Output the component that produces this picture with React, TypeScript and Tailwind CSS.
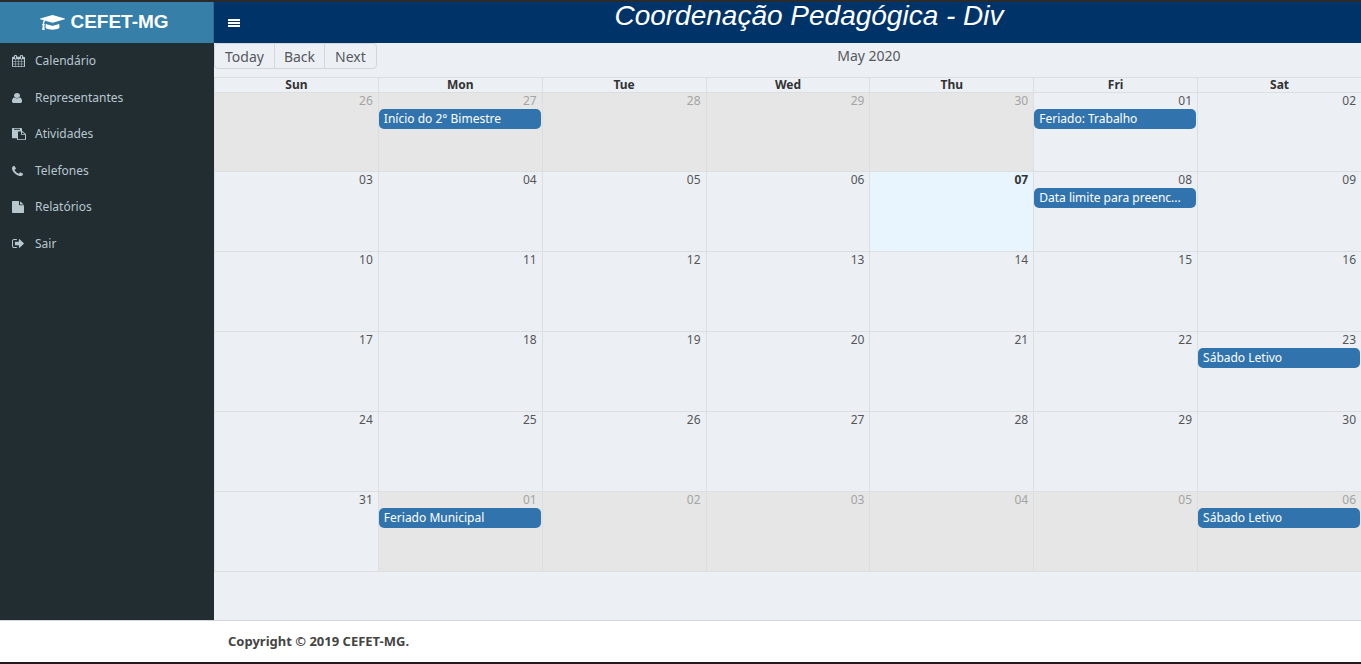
import React from 'react';

type IconProps = { path: string; viewBox?: string; className: string };

function Icon({ path, viewBox = '0 0 1792 1792', className }: IconProps) {
  return (
    <svg viewBox={viewBox} preserveAspectRatio="none" fill="currentColor" aria-hidden="true" className={className}>
      <path d={path} />
    </svg>
  );
}

const capPath =
  'M1774 1000l18 316q4 69-82 128t-235 93.5-323 34.5-323-34.5-235-93.5-82-128l18-316 574 181q22 7 48 7t48-7zm530-488q0 23-22 31l-1120 352q-4 1-10 1t-10-1l-652-206q-43 34-71 111.5t-34 178.5q63 36 63 109 0 69-58 107l58 433q2 14-8 25-9 11-24 11h-192q-15 0-24-11-10-11-8-25l58-433q-58-38-58-107 0-73 65-111 11-207 98-330l-333-104q-22-8-22-31t22-31l1120-352q4-1 10-1t10 1l1120 352q22 8 22 31z';

const menu = [
  {
    label: 'Calendário',
    viewBox: '64 0 1664 1792',
    size: 'h-3 w-[13px]',
    path: 'M192 1664h288v-288h-288v288zM544 1664h320v-288h-320v288zM192 1312h288v-320h-288v320zM544 1312h320v-320h-320v320zM192 928h288v-288h-288v288zM928 1664h320v-288h-320v288zM544 928h320v-288h-320v288zM1312 1664h288v-288h-288v288zM928 1312h320v-320h-320v320zM576 480v-288q0-13-9.5-22.5t-22.5-9.5h-64q-13 0-22.5 9.5t-9.5 22.5v288q0 13 9.5 22.5t22.5 9.5h64q13 0 22.5-9.5t9.5-22.5zM1312 1312h288v-320h-288v320zM928 928h320v-288h-320v288zM1312 928h288v-288h-288v288zM1344 480v-288q0-13-9.5-22.5t-22.5-9.5h-64q-13 0-22.5 9.5t-9.5 22.5v288q0 13 9.5 22.5t22.5 9.5h64q13 0 22.5-9.5t9.5-22.5zM1728 384v1280q0 52-38 90t-90 38h-1408q-52 0-90-38t-38-90v-1280q0-52 38-90t90-38h128v-96q0-66 47-113t113-47h64q66 0 113 47t47 113v96h384v-96q0-66 47-113t113-47h64q66 0 113 47t47 113v96h128q52 0 90 38t38 90z',
  },
  {
    label: 'Representantes',
    viewBox: '256 128 1280 1536',
    size: 'h-[10px] w-[10px]',
    path: 'M1536 1399q0 109-62.5 187t-150.5 78h-854q-88 0-150.5-78t-62.5-187q0-85 8.5-160.5t31.5-152 58.5-131 94-89 134.5-34.5q131 128 313 128t313-128q76 0 134.5 34.5t94 89 58.5 131 31.5 152 8.5 160.5zm-256-887q0 159-112.5 271.5t-271.5 112.5-271.5-112.5-112.5-271.5 112.5-271.5 271.5-112.5 271.5 112.5 112.5 271.5z',
  },
  {
    label: 'Atividades',
    viewBox: '0 0 1792 1792',
    size: 'h-3 w-[14px]',
    path: 'M768 1664h896v-640h-416q-40 0-68-28t-28-68v-416h-384v1152zm256-1440v-64q0-13-9.5-22.5t-22.5-9.5h-704q-13 0-22.5 9.5t-9.5 22.5v64q0 13 9.5 22.5t22.5 9.5h704q13 0 22.5-9.5t9.5-22.5zm256 672h299l-299-299v299zm512 128v672q0 40-28 68t-68 28h-960q-40 0-68-28t-28-68v-160h-544q-40 0-68-28t-28-68v-1344q0-40 28-68t68-28h1088q40 0 68 28t28 68v328q21 13 36 28l408 408q28 28 48 76t20 88z',
  },
  {
    label: 'Telefones',
    viewBox: '192 128 1408 1408',
    size: 'h-[10px] w-[11px]',
    path: 'M1600 1240q0 27-10 70.5t-21 68.5q-21 50-122 106-94 51-186 51-27 0-52.5-3.5t-57.5-12.5-47.5-14.5-55.5-20.5-49-18q-98-35-175-83-128-79-264.5-215.5t-215.5-264.5q-48-77-83-175-3-9-18-49t-20.5-55.5-14.5-47.5-12.5-57.5-3.5-52.5q0-92 51-186 56-101 106-122 25-11 68.5-21t70.5-10q14 0 21 3 18 6 53 76 11 19 30 54t35 63.5 31 53.5q3 4 17.5 25t21.5 35.5 7 28.5q0 20-28.5 50t-62 55-62 53-28.5 46q0 9 5 22.5t8.5 20.5 14 24 11.5 19q76 137 174 235t235 174q2 1 19 11.5t24 14 20.5 8.5 22.5 5q18 0 46-28.5t53-62 55-62 50-28.5q14 0 28.5 7t35.5 21.5 25 17.5q25 15 53.5 31t63.5 35 54 30q70 35 76 53 3 7 3 21z',
  },
  {
    label: 'Relatórios',
    viewBox: '128 0 1536 1792',
    size: 'h-3 w-3',
    path: 'M1152 512v-472q22 14 36 28l408 408q14 14 28 36h-472zm-128 32q0 40 28 68t68 28h544v1056q0 40-28 68t-68 28h-1344q-40 0-68-28t-28-68v-1600q0-40 28-68t68-28h800v544z',
  },
  {
    label: 'Sair',
    viewBox: '64 256 1568 1280',
    size: 'h-[9px] w-3',
    path: 'M704 1440q0 4 1 20t.5 26.5-3 23.5-10 19.5-20.5 6.5h-320q-119 0-203.5-84.5t-84.5-203.5v-704q0-119 84.5-203.5t203.5-84.5h320q13 0 22.5 9.5t9.5 22.5q0 4 1 20t.5 26.5-3 23.5-10 19.5-20.5 6.5h-320q-66 0-113 47t-47 113v704q0 66 47 113t113 47h312l11.5 1 11.5 3 8 5.5 7 9 2 13.5zm928-544q0 26-19 45l-544 544q-19 19-45 19t-45-19-19-45v-288h-448q-26 0-45-19t-19-45v-384q0-26 19-45t45-19h448v-288q0-26 19-45t45-19 45 19l544 544q19 19 19 45z',
  },
];

const weekdays = ['Sun', 'Mon', 'Tue', 'Wed', 'Thu', 'Fri', 'Sat'];

const events: Record<string, string> = {
  '2020-04-27': 'Início do 2° Bimestre',
  '2020-05-01': 'Feriado: Trabalho',
  '2020-05-08': 'Data limite para preenc...',
  '2020-05-23': 'Sábado Letivo',
  '2020-06-01': 'Feriado Municipal',
  '2020-06-06': 'Sábado Letivo',
};

const weeks = Array.from({ length: 6 }, (_, week) =>
  Array.from({ length: 7 }, (_, day) => {
    const key = new Date(Date.UTC(2020, 3, 26 + week * 7 + day)).toISOString().slice(0, 10);
    return { key, day: key.slice(8), off: key.slice(5, 7) !== '05', today: key === '2020-05-07' };
  }),
);

function Calendar() {
  return (
    <section aria-label="Calendário">
      <div className="mb-2 flex items-center text-[14px] text-[#55595c]">
        <div className="flex h-[26px] rounded-sm border border-[#d3d6da]">
          <button type="button" className="px-[10px]">Today</button>
          <button type="button" className="border-x border-[#d3d6da] px-[9px]">Back</button>
          <button type="button" className="px-[10px]">Next</button>
        </div>
        <h2 className="flex-1 text-center leading-6">May 2020</h2>
      </div>
      <table className="w-full table-fixed border-separate border-spacing-0 border-b border-[#dcdfe2]">
        <thead>
          <tr>
            {weekdays.map((name) => (
              <th key={name} className="h-[15px] border-t border-l border-[#dcdfe2] p-0 text-[12px] leading-[14px] font-bold text-[#333]">
                {name}
              </th>
            ))}
          </tr>
        </thead>
        <tbody>
          {weeks.map((week) => (
            <tr key={week[0].key} className="h-20 first:h-[79px]">
              {week.map(({ key, day, off, today }) => (
                <td
                  key={key}
                  className={`border-t border-l border-[#dcdfe2] p-0 align-top text-[12px] ${
                    off ? 'bg-[#e6e6e6] text-[#a4a4a4]' : today ? 'bg-[#e8f5ff] font-bold text-[#333]' : 'text-[#555]'
                  }`}
                >
                  <div className="h-4 pr-[5px] text-right leading-4">{day}</div>
                  {events[key] && (
                    <div className="pr-px">
                      <button
                        type="button"
                        className="block h-5 w-full truncate rounded-[5px] bg-[#3174ad] px-[5px] text-left leading-5 text-white"
                      >
                        {events[key]}
                      </button>
                    </div>
                  )}
                </td>
              ))}
            </tr>
          ))}
        </tbody>
      </table>
    </section>
  );
}

export default function App() {
  return (
    <div className="flex min-h-screen flex-col border-t-2 border-[#2b2b2b] bg-white font-['Noto_Sans',sans-serif]">
      <header className="flex h-[41px] bg-[#003469] text-white">
        <a
          href="#inicio"
          className="flex w-[214px] shrink-0 items-center justify-center gap-[5px] border-r border-[#2d6a92] bg-[#367fa9] pr-1 font-['Liberation_Sans',sans-serif] text-[19px] font-bold"
        >
          <Icon path={capPath} viewBox="0 128 2304 1472" className="h-[15px] w-[25px]" />
          CEFET-MG
        </a>
        <button type="button" aria-label="Menu" className="flex w-[43px] shrink-0 items-center pl-[14px]">
          <svg viewBox="0 0 12 8" className="h-2 w-3" fill="currentColor" aria-hidden="true">
            <path d="M0 0h12v2H0zM0 3h12v2H0zM0 6h12v2H0z" />
          </svg>
        </button>
        <h1 className="flex-1 text-center font-['Liberation_Sans',sans-serif] text-[28px] leading-[28px] italic">
          Coordenação Pedagógica - Div
        </h1>
      </header>
      <div className="flex flex-1">
        <nav className="w-[214px] shrink-0 bg-[#222d32]">
          <ul className="grid h-[219px] grid-rows-6">
            {menu.map(({ label, path, viewBox, size }) => (
              <li key={label} className="flex">
                <a href="#menu" className="flex flex-1 items-center pl-3 text-[12px] text-[#b8c7ce]">
                  <span className="flex w-[23px]">
                    <Icon path={path} viewBox={viewBox} className={size} />
                  </span>
                  {label}
                </a>
              </li>
            ))}
          </ul>
        </nav>
        <main className="min-w-0 flex-1 bg-[#ecf0f5]">
          <Calendar />
        </main>
      </div>
      <footer className="border-t border-b-2 border-t-[#d2d6de] border-b-[#241a1d] pl-[228px] text-[13px] leading-[41px] font-bold text-[#444]">
        Copyright © 2019 CEFET-MG.
      </footer>
    </div>
  );
}
